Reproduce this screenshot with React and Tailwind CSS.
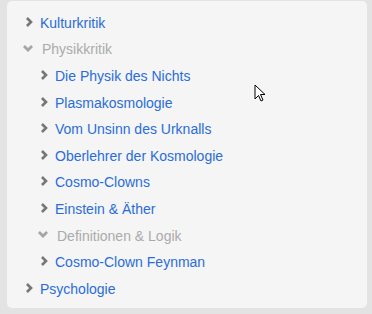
import React from 'react';

const tree = [
  { titel: 'Kulturkritik' },
  {
    titel: 'Physikkritik',
    offen: true,
    kinder: [
      { titel: 'Die Physik des Nichts' },
      { titel: 'Plasmakosmologie' },
      { titel: 'Vom Unsinn des Urknalls' },
      { titel: 'Oberlehrer der Kosmologie' },
      { titel: 'Cosmo-Clowns' },
      { titel: 'Einstein & Äther' },
      { titel: 'Definitionen & Logik', offen: true, kinder: [] },
      { titel: 'Cosmo-Clown Feynman' },
    ],
  },
  { titel: 'Psychologie' },
];

const PfeilRechts = () => (
  <svg width="7" height="10" viewBox="0 0 7 10">
    <polygon points="0,1.9 1.9,0 6.9,5 1.9,10 0,8.1 3.1,5" fill="#777" />
  </svg>
);

const PfeilRunter = () => (
  <svg width="10" height="7" viewBox="0 0 10 7">
    <polygon points="0,1.9 1.9,0 5,3.1 8.1,0 10,1.9 5,6.9" fill="#a6a6a6" />
  </svg>
);

const Eintrag = ({ item }) => (
  <li>
    <div className="flex items-center h-[26.6px]">
      {item.offen ? (
        <span className="w-[19px] -ml-[3px] flex justify-start -mt-[3px]">
          <PfeilRunter />
        </span>
      ) : (
        <span className="w-[14px] flex justify-start -mt-[3px]">
          <PfeilRechts />
        </span>
      )}
      <a className={item.offen ? 'text-[#ababab]' : 'text-[#2a6dd8]'}>{item.titel}</a>
    </div>
    {item.kinder && item.kinder.length > 0 && (
      <ul className="pl-[15px]">
        {item.kinder.map((k, i) => (
          <Eintrag key={i} item={k} />
        ))}
      </ul>
    )}
  </li>
);

export default function App() {
  return (
    <div className="w-[372px] h-[314px] bg-[#e3e3e3] pt-[1px] pl-[7px] relative" style={{ fontFamily: '"Liberation Sans", Arial, sans-serif' }}>
      <div className="w-[360px] h-[307px] bg-[#f5f5f5] rounded-[5px] pt-[9px] pl-[19px] text-[14px]">
        <ul>
          {tree.map((item, i) => (
            <Eintrag key={i} item={item} />
          ))}
        </ul>
      </div>
      <svg className="absolute left-[254px] top-[84px]" width="13" height="20" viewBox="0 0 13 20">
        <path d="M1 1 L1 15 L4.5 11.5 L7 17 L9 16 L6.5 10.5 L11 10.5 Z" fill="#fff" stroke="#000" strokeWidth="1" strokeLinejoin="miter" />
      </svg>
    </div>
  );
}
